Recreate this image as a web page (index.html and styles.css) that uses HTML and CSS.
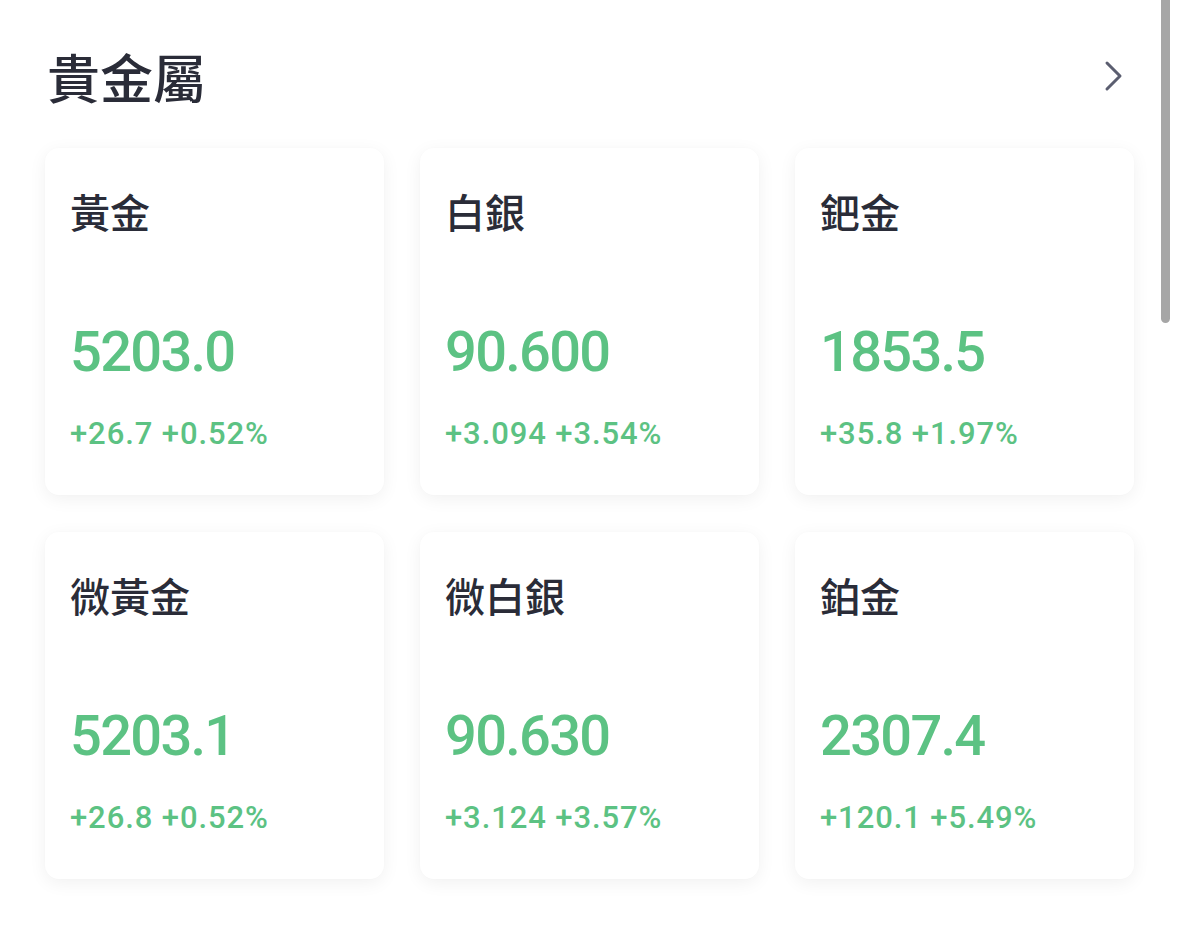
FILE: index.html
```html
<!DOCTYPE html>
<html lang="zh-Hant">
<head>
<meta charset="utf-8">
<link rel="stylesheet" href="styles.css">
</head>
<body>
<div class="page">
  <header class="head">
    <h1 class="title">貴金屬</h1>
    <svg class="chev" width="20" height="32" viewBox="0 0 20 32"><path d="M3 3 L16 16 L3 29" fill="none" stroke="#5b5e70" stroke-width="3" stroke-linecap="round" stroke-linejoin="round"/></svg>
  </header>
  <div class="grid">
    <div class="card"><div class="name">黃金</div><div class="price">5203.0</div><div class="chg">+26.7 +0.52%</div></div>
    <div class="card"><div class="name">白銀</div><div class="price">90.600</div><div class="chg">+3.094 +3.54%</div></div>
    <div class="card"><div class="name">鈀金</div><div class="price">1853.5</div><div class="chg">+35.8 +1.97%</div></div>
    <div class="card"><div class="name">微黃金</div><div class="price">5203.1</div><div class="chg">+26.8 +0.52%</div></div>
    <div class="card"><div class="name">微白銀</div><div class="price">90.630</div><div class="chg">+3.124 +3.57%</div></div>
    <div class="card"><div class="name">鉑金</div><div class="price">2307.4</div><div class="chg">+120.1 +5.49%</div></div>
  </div>
</div>
<div class="scrollbar"></div>
</body>
</html>
```
FILE: styles.css
```css
html, body { margin: 0; padding: 0; background: #fff; }
body { font-family: Roboto, "Noto Sans CJK TC", sans-serif; color: #2a2c38; width: 1179px; height: 927px; overflow: hidden; position: relative; }
.page { padding: 46px 0 0 45px; width: 1089px; }
.head { display: flex; align-items: center; justify-content: space-between; height: 60px; padding-left: 2px; }
.title { margin: 0; font-family: "Noto Sans CJK TC", sans-serif; font-size: 53px; line-height: 60px; font-weight: 500; color: #2a2c38; }
.chev { margin-right: 10px; margin-top: 0; }
.grid { margin-top: 42px; display: grid; grid-template-columns: repeat(3, 339px); column-gap: 36px; row-gap: 37px; }
.card { height: 347px; box-sizing: border-box; padding: 39px 25px 0; background: #fff; border-radius: 14px; box-shadow: 0 4px 18px rgba(0,0,0,0.06), 0 0 2px rgba(0,0,0,0.02); display: flex; flex-direction: column; }
.name { font-family: "Noto Sans CJK TC", sans-serif; font-size: 40px; line-height: 48px; font-weight: 500; color: #2a2c38; }
.price { margin-top: 84px; font-family: Roboto, sans-serif; font-size: 56px; line-height: 67px; font-weight: 500; letter-spacing: -1.7px; color: #5cc283; }
.chg { margin-top: 30px; font-family: Roboto, sans-serif; font-size: 31px; line-height: 36px; font-weight: 500; letter-spacing: 0.9px; color: #5cc283; }
.scrollbar { position: absolute; left: 1161px; top: -6px; width: 9px; height: 329px; border-radius: 5px; background: #a6a6a6; }
```
